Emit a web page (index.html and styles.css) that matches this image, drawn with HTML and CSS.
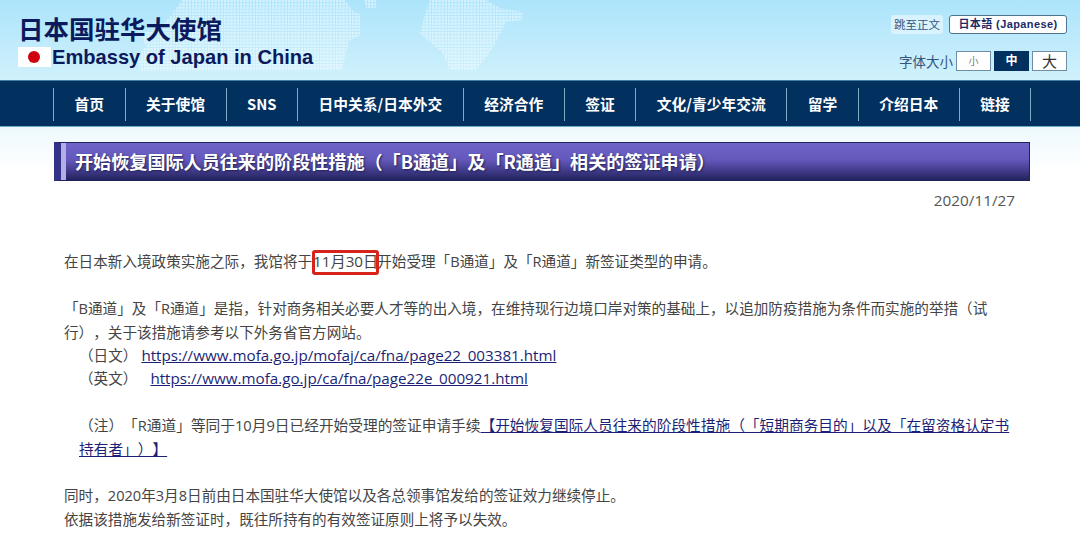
FILE: index.html
```html
<!DOCTYPE html>
<html lang="zh-CN">
<head>
    <meta charset="UTF-8">
    <meta name="viewport" content="width=device-width, initial-scale=1.0">
    <title>日本国驻华大使馆</title>
    <link rel="stylesheet" href="styles.css">
</head>
<body>

    <header class="site-header">
        <svg class="dot-map" width="560" height="80" viewBox="0 0 560 80" aria-hidden="true">
            <defs>
                <pattern id="dots" width="3.2" height="3.2" patternUnits="userSpaceOnUse">
                    <rect width="2.3" height="2.3" fill="#fff" fill-opacity="0.5"/>
                </pattern>
            </defs>
            <path fill="url(#dots)" d="M182 0H345L352 10 360 14V36L350 40 346 52 342 70 140 71 138 58 146 46 140 34 160 28 172 14Z"/>
            <path fill="url(#dots)" d="M364 0H376V8H366Z"/>
            <path fill="url(#dots)" d="M430 0H486L500 8 523 12 522 20 506 22 500 34 490 52 476 70 450 70 442 52 420 34 424 18Z"/>
        </svg>

        <div class="brand">
            <div class="brand-title">日本国驻华大使馆</div>
            <div class="brand-sub">
                <svg class="flag" width="33" height="20" viewBox="0 0 33 20" aria-hidden="true">
                    <rect width="33" height="20" fill="#fff"/>
                    <circle cx="16" cy="10" r="6" fill="#d0000f"/>
                </svg>
                <span>Embassy of Japan in China</span>
            </div>
        </div>

        <div class="tools">
            <div class="tools-row">
                <a class="skip-link" href="#main">跳至正文</a>
                <a class="lang-btn" href="#">日本語 (Japanese)</a>
            </div>
            <div class="tools-row size-row">
                <span class="size-label">字体大小</span>
                <span class="size-btn small">小</span>
                <span class="size-btn active">中</span>
                <span class="size-btn large">大</span>
            </div>
        </div>
    </header>

    <nav class="main-nav">
        <a href="#">首页</a>
        <a href="#">关于使馆</a>
        <a href="#">SNS</a>
        <a href="#">日中关系/日本外交</a>
        <a href="#">经济合作</a>
        <a href="#">签证</a>
        <a href="#">文化/青少年交流</a>
        <a href="#">留学</a>
        <a href="#">介绍日本</a>
        <a href="#">链接</a>
    </nav>

    <main class="content" id="main">
        <h1 class="page-title">开始恢复国际人员往来的阶段性措施（「B通道」及「R通道」相关的签证申请）</h1>
        <div class="date">2020/11/27</div>

        <div class="article">
            <p>在日本新入境政策实施之际，我馆将于<span class="mark">11月30日</span>开始受理「B通道」及「R通道」新签证类型的申请。</p>

            <p>「B通道」及「R通道」是指，针对商务相关必要人才等的出入境，在维持现行边境口岸对策的基础上，以追加防疫措施为条件而实施的举措（试行），关于该措施请参考以下外务省官方网站。<br>
            <span class="ref">（日文）<a href="#">https://www.mofa.go.jp/mofaj/ca/fna/page22_003381.html</a></span><br>
            <span class="ref">（英文）<a class="en-link" href="#">https://www.mofa.go.jp/ca/fna/page22e_000921.html</a></span></p>

            <p class="note">（注）「R通道」等同于10月9日已经开始受理的签证申请手续<a href="#">【开始恢复国际人员往来的阶段性措施（「短期商务目的」以及「在留资格认定书持有者」）】</a></p>

            <p>同时，2020年3月8日前由日本国驻华大使馆以及各总领事馆发给的签证效力继续停止。<br>
            依据该措施发给新签证时，既往所持有的有效签证原则上将予以失效。</p>
        </div>
    </main>

</body>
</html>
```

FILE: styles.css
```css
body {
    margin: 0;
    font-family: "Open Sans", "Noto Sans CJK SC", sans-serif;
    background-color: #fff;
    color: #444;
    text-spacing-trim: space-all;
}

a {
    color: #1b1f75;
}

.site-header {
    position: relative;
    display: flex;
    justify-content: space-between;
    height: 80px;
    padding: 0 13px 0 18px;
    box-sizing: border-box;
    background: linear-gradient(180deg, #ace4fb 0%, #d0f1fc 100%);
}

.dot-map {
    position: absolute;
    left: 0;
    top: 0;
}

.brand {
    position: relative;
    padding-top: 11px;
}

.brand-title {
    font-family: "Noto Sans CJK SC", sans-serif;
    font-size: 25.5px;
    font-weight: bold;
    line-height: 34px;
    color: #0b1a5c;
}

.brand-sub {
    display: flex;
    align-items: center;
    gap: 1px;
    margin-top: 1px;
    font-family: "Liberation Sans", sans-serif;
    font-size: 20.1px;
    font-weight: bold;
    line-height: 22px;
    color: #0b1a5c;
}

.tools {
    position: relative;
    display: flex;
    flex-direction: column;
    align-items: flex-end;
    padding-top: 15px;
    gap: 17px;
}

.tools-row {
    display: flex;
    align-items: center;
}

.skip-link {
    padding: 2px 3px;
    margin-right: 6px;
    font-size: 11.5px;
    line-height: 15px;
    color: #33557f;
    text-decoration: none;
    background-color: #d8f3fd;
    border-radius: 3px;
}

.lang-btn {
    width: 118px;
    height: 19px;
    box-sizing: border-box;
    font-family: "Liberation Sans", "Noto Sans CJK SC", sans-serif;
    font-size: 11px;
    font-weight: bold;
    line-height: 17px;
    letter-spacing: 0.4px;
    text-align: center;
    text-decoration: none;
    color: #1b2a66;
    background-color: #fff;
    border: 1px solid #4d7390;
    border-radius: 3px;
}

.size-row {
    gap: 3px;
}

.size-label {
    font-size: 13.5px;
    color: #33557f;
}

.size-btn {
    width: 35px;
    height: 20px;
    box-sizing: border-box;
    text-align: center;
    font-size: 13px;
    line-height: 18px;
    color: #333;
    background-color: #fff;
    border: 1px solid #6f8ea3;
}

.size-btn.small {
    font-size: 10px;
    color: #777;
}

.size-btn.active {
    font-size: 12px;
    font-weight: bold;
    color: #fff;
    background-color: #02305f;
    border-color: #02305f;
}

.size-btn.large {
    font-size: 15px;
}

.main-nav {
    display: flex;
    height: 47px;
    padding: 7px 0 5px 53px;
    box-sizing: border-box;
    background-color: #02305f;
    border-top: 1px solid #3f7fa3;
    border-bottom: 1px solid #6aa8c8;
}

.main-nav a {
    padding: 0 20.5px;
    font-family: "Noto Sans CJK SC", sans-serif;
    font-size: 14.75px;
    font-weight: bold;
    line-height: 32px;
    color: #fff;
    text-decoration: none;
    border-left: 1px solid #7fa9c4;
}

.main-nav a:last-child {
    border-right: 1px solid #7fa9c4;
}

.content {
    padding: 15px 50px 0 54px;
    background: linear-gradient(180deg, #eef9fd 0, #fff 45px);
}

.page-title {
    margin: 0;
    height: 39px;
    box-sizing: border-box;
    padding-left: 14px;
    font-family: "Noto Sans CJK SC", sans-serif;
    font-size: 18.1px;
    font-weight: bold;
    line-height: 37px;
    color: #fff;
    text-shadow: 1px 1px 2px #222255;
    background: linear-gradient(180deg, #6f64ca 0%, #6458bb 45%, #23235f 100%);
    border: 1px solid #22225a;
    border-left: 7px solid #33338a;
    box-shadow: inset 5px 0 0 #b4aee8;
}

.date {
    margin: 8px 15px 0 0;
    font-size: 15.3px;
    line-height: 22px;
    text-align: right;
    color: #555;
}

.article {
    margin-top: 39.4px;
    padding: 0 15px 0 10px;
    font-size: 14.6px;
    line-height: 23.4px;
}

.article p {
    margin: 0 0 23.4px;
}

.ref {
    padding-left: 15px;
}

.ref a {
    margin-left: 4px;
    font-size: 15.2px;
}

.ref .en-link {
    margin-left: 13px;
}

.note {
    padding-left: 15px;
    font-size: 14.7px;
}

.mark {
    position: relative;
    margin: 0 -1px 0 1px;
    font-size: 15.2px;
}

/* red box drawn over the date */
.mark::after {
    content: "";
    position: absolute;
    top: -1px;
    right: -1px;
    bottom: -4px;
    left: -1px;
    border: 3px solid #d8231d;
    border-radius: 3px;
}
```
